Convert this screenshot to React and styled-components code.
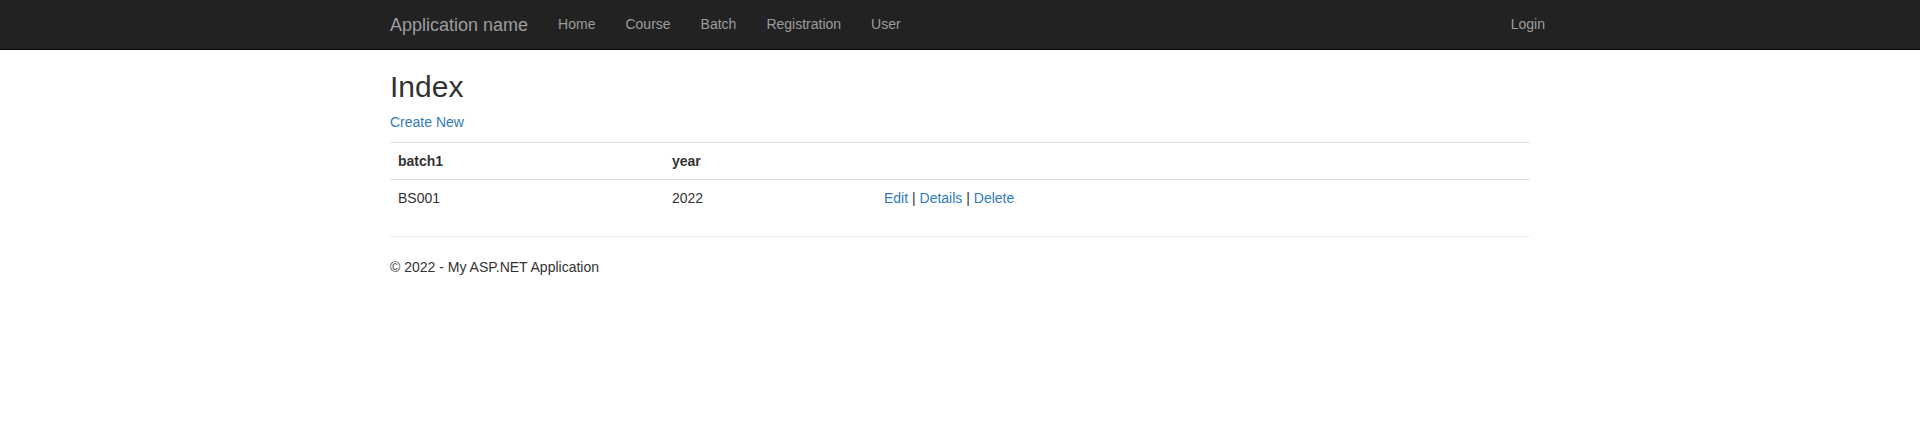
import React from "react";
import styled, { createGlobalStyle } from "styled-components";

const GlobalStyle = createGlobalStyle`
    *, *::before, *::after {
        box-sizing: border-box;
    }
    body {
        margin: 0;
        padding-top: 50px;
        font-family: "Liberation Sans", Arial, Helvetica, sans-serif;
        font-size: 14px;
        line-height: 1.42857143;
        color: #333;
        background: #fff;
    }
`

const Navbar = styled.nav`
    position: fixed;
    top: 0;
    left: 0;
    right: 0;
    height: 50px;
    background-color: #222;
    border-bottom: 1px solid #080808;
    z-index: 10;
`

const Container = styled.div`
    width: 1170px;
    margin: 0 auto;
    padding: 0 15px;
`

const NavInner = styled(Container)`
    display: flex;
    align-items: center;
    height: 49px;
`

const Brand = styled.a`
    font-size: 18px;
    line-height: 20px;
    padding: 15px 15px 14px 0;
    color: #9d9d9d;
    text-decoration: none;
`

const NavList = styled.ul`
    display: flex;
    list-style: none;
    margin: 0 ${p => (p.$right ? "-30px" : "0")} 0 ${p => (p.$right ? "auto" : "0")};
    padding: 0;
`

const NavLink = styled.a`
    display: block;
    padding: 14px 15px 15px;
    line-height: 20px;
    color: #9d9d9d;
    text-decoration: none;
`

const Heading = styled.h2`
    font-size: 30px;
    font-weight: 500;
    line-height: 1.1;
    margin: 20px 0 9px;
`

const Paragraph = styled.p`
    margin: 0 0 10px;
`

const Link = styled.a`
    color: #337ab7;
    text-decoration: none;
`

const Table = styled.table`
    width: 100%;
    border-collapse: collapse;
    border-spacing: 0;
    margin-bottom: 20px;
`

const Cell = styled.td`
    padding: 8px;
    line-height: 20px;
    text-align: left;
    vertical-align: top;
    border-top: 1px solid #ddd;
    font-weight: ${p => (p.as === "th" ? 700 : 400)};
    width: ${p => p.$width || "auto"};
`

const Rule = styled.hr`
    margin: 20px 0;
    border: 0;
    border-top: 1px solid #eee;
`

const Footer = styled.footer`
    p {
        margin: 0 0 10px;
    }
`

const navItems = ["Home", "Course", "Batch", "Registration", "User"];

const App = () => {
    return (
        <>
            <GlobalStyle />
            <Navbar>
                <NavInner>
                    <Brand href="#">Application name</Brand>
                    <NavList>
                        {navItems.map(item => (
                            <li key={item}><NavLink href="#">{item}</NavLink></li>
                        ))}
                    </NavList>
                    <NavList $right>
                        <li><NavLink href="#">Login</NavLink></li>
                    </NavList>
                </NavInner>
            </Navbar>
            <Container>
                <Heading>Index</Heading>
                <Paragraph><Link href="#">Create New</Link></Paragraph>
                <Table>
                    <tbody>
                        <tr>
                            <Cell as="th" $width="274px">batch1</Cell>
                            <Cell as="th" $width="212px">year</Cell>
                            <Cell as="th"></Cell>
                        </tr>
                        <tr>
                            <Cell>BS001</Cell>
                            <Cell>2022</Cell>
                            <Cell>
                                <Link href="#">Edit</Link> |{" "}
                                <Link href="#">Details</Link> |{" "}
                                <Link href="#">Delete</Link>
                            </Cell>
                        </tr>
                    </tbody>
                </Table>
                <Rule />
                <Footer>
                    <p>&copy; 2022 - My ASP.NET Application</p>
                </Footer>
            </Container>
        </>
    )
}

export default App
